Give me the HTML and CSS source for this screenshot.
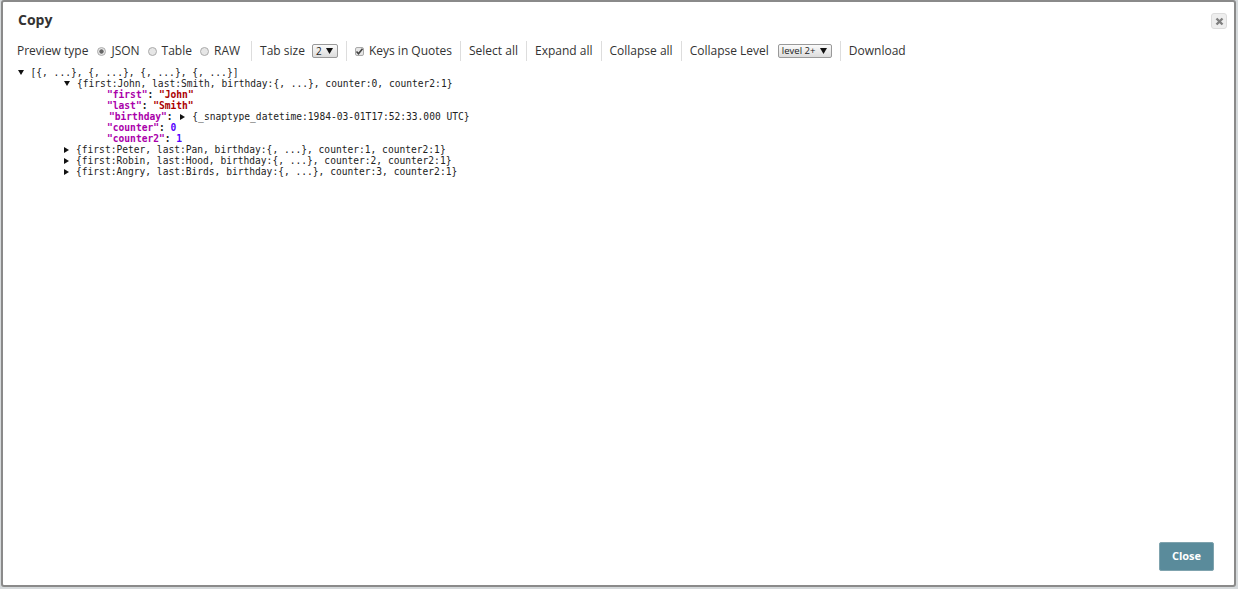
FILE: index.html
```html
<!DOCTYPE html>
<html lang="en">
<head>
<meta charset="utf-8">
<title>Copy</title>
<link rel="stylesheet" href="styles.css">
</head>
<body>
<div class="modal">
  <header class="head">
    <h1 class="title">Copy</h1>
    <button class="x" aria-label="Close"><svg width="9" height="9" viewBox="0 0 9 9"><path d="M1.5 1.5l6 6M7.5 1.5l-6 6" stroke="#808080" stroke-width="2.4" fill="none"/></svg></button>
  </header>
  <div class="toolbar">
    <div class="group first">
      <span class="lbl">Preview type</span>
      <label class="opt"><span class="radio on"></span>JSON</label>
      <label class="opt"><span class="radio"></span>Table</label>
      <label class="opt"><span class="radio"></span>RAW</label>
    </div>
    <div class="group">
      <span class="lbl">Tab size</span>
      <span class="sel"><span>2</span><svg width="7" height="6" viewBox="0 0 7 6"><path d="M0 0h7L3.5 6z" fill="#111"/></svg></span>
    </div>
    <div class="group">
      <label class="opt"><span class="check"><svg width="9" height="9" viewBox="0 0 9 9"><path d="M1.5 4.5l2 2.2 4-5" stroke="#444" stroke-width="1.6" fill="none"/></svg></span>Keys in Quotes</label>
    </div>
    <div class="group">Select all</div>
    <div class="group">Expand all</div>
    <div class="group">Collapse all</div>
    <div class="group">
      <span class="lbl">Collapse Level</span>
      <span class="sel small"><span>level 2+</span><svg width="7" height="6" viewBox="0 0 7 6"><path d="M0 0h7L3.5 6z" fill="#111"/></svg></span>
    </div>
    <div class="group">Download</div>
  </div>
  <div class="tree">
    <div class="row top"><i class="tri down"></i><span class="txt">[{, ...}, {, ...}, {, ...}, {, ...}]</span></div>
    <div class="row l1"><i class="tri down"></i><span class="txt">{first:John, last:Smith, birthday:{, ...}, counter:0, counter2:1}</span></div>
    <div class="row l2"><span class="k">"first"</span><span>: </span><span class="s">"John"</span></div>
    <div class="row l2"><span class="k">"last"</span><span>: </span><span class="s">"Smith"</span></div>
    <div class="row l2b"><span class="k">"birthday"</span><span>: </span><i class="tri right inl"></i><span class="txt">{_snaptype_datetime:1984-03-01T17:52:33.000 UTC}</span></div>
    <div class="row l2"><span class="k">"counter"</span><span>: </span><span class="n">0</span></div>
    <div class="row l2"><span class="k">"counter2"</span><span>: </span><span class="n">1</span></div>
    <div class="row l1"><i class="tri right"></i><span class="txt">{first:Peter, last:Pan, birthday:{, ...}, counter:1, counter2:1}</span></div>
    <div class="row l1"><i class="tri right"></i><span class="txt">{first:Robin, last:Hood, birthday:{, ...}, counter:2, counter2:1}</span></div>
    <div class="row l1"><i class="tri right"></i><span class="txt">{first:Angry, last:Birds, birthday:{, ...}, counter:3, counter2:1}</span></div>
  </div>
  <footer class="foot"><button class="close">Close</button></footer>
</div>
</body>
</html>
```
FILE: styles.css
```css
* { box-sizing: border-box; }
html, body { height: 100%; }
body {
  margin: 0;
  padding: 0 2px 2px 1px;
  background: #d5d9db;
  font-family: "Open Sans", sans-serif;
  color: #333;
  overflow: hidden;
}
.modal {
  height: 587px;
  border: 2px solid #8a8a8a;
  border-radius: 3px;
  background: #fff;
  display: flex;
  flex-direction: column;
}
.head {
  display: flex;
  justify-content: space-between;
  align-items: flex-start;
  padding: 9px 7px 0 15px;
  height: 38px;
}
.title {
  margin: 0;
  font-size: 14px;
  line-height: 17px;
  font-weight: 700;
  color: #333;
}
.x {
  width: 16px;
  height: 16px;
  margin-top: 2px;
  padding: 0;
  border: 1px solid #dcdcdc;
  border-radius: 3px;
  background: #eee;
  display: flex;
  align-items: center;
  justify-content: center;
}
.toolbar {
  display: flex;
  align-items: center;
  height: 20px;
  margin-top: 1px;
  padding-left: 14px;
  font-size: 12px;
  line-height: 18px;
  color: #333;
}
.group {
  display: flex;
  align-items: center;
  height: 20px;
  padding: 0 8px;
  border-left: 1px solid #ddd;
  white-space: nowrap;
}
.group.first { padding: 0 11px 0 0; border-left: 0; }
.opt { display: flex; align-items: center; margin-left: 8px; }
.group > .lbl + .opt { margin-left: 9px; }
.group > .opt:first-child { margin-left: 0; }
.radio {
  width: 9px;
  height: 9px;
  margin-right: 5px;
  border: 1px solid #aaa;
  border-radius: 50%;
  background: #e6e6e6;
  display: block;
}
.radio.on { background: radial-gradient(circle, #666 0 1.8px, #e6e6e6 2.5px); }
.check {
  width: 9px;
  height: 9px;
  margin-right: 5px;
  border: 1px solid #aaa;
  border-radius: 2px;
  background: #e6e6e6;
  display: flex;
  align-items: center;
  justify-content: center;
}
.check svg { flex: none; }
.sel {
  display: inline-flex;
  align-items: center;
  justify-content: space-between;
  width: 26px;
  height: 14px;
  margin-left: 7px;
  padding: 0 4px 0 3px;
  border: 1px solid #999;
  border-radius: 2px;
  background: linear-gradient(#fafafa, #dcdcdc);
  font-size: 10px;
  line-height: 12px;
  color: #222;
}
.sel.small { width: 54px; margin-left: 9px; font-size: 9.5px; }
.tree {
  flex: 1;
  padding: 6px 0 0 15px;
  font-family: "DejaVu Sans Mono", monospace;
  font-size: 9.6px;
  line-height: 11px;
  color: #222;
}
.row { display: flex; height: 11px; align-items: center; white-space: pre; }
.l1 { padding-left: 46px; }
.l2 { padding-left: 89px; font-weight: 700; }
.l2b { padding-left: 91px; font-weight: 700; }
.k { color: #a0a; }
.s { color: #a00; }
.n { color: #50f; }
.txt { font-weight: 400; color: #222; }
.tri { display: block; width: 0; height: 0; flex: none; margin-right: 6px; border-style: solid; }
.tri.down { border-width: 5px 3px 0 3px; border-color: #111 transparent transparent; margin-right: 7px; }
.top .tri.down { margin-right: 6.5px; }
.tri.right { border-width: 3px 0 3px 5px; border-color: transparent transparent transparent #111; margin-right: 7px; }
.tri.inl { margin-left: 2px; margin-right: 7px; }
.foot {
  display: flex;
  justify-content: flex-end;
  padding: 0 20px 14px 0;
}
.close {
  width: 55px;
  height: 29px;
  padding: 0 0 2px;
  border: 1px solid #7fa3ae;
  border-radius: 2px;
  background: #5a8b9b;
  color: #fff;
  font-family: "Open Sans", sans-serif;
  font-size: 11px;
  font-weight: 700;
}
```
